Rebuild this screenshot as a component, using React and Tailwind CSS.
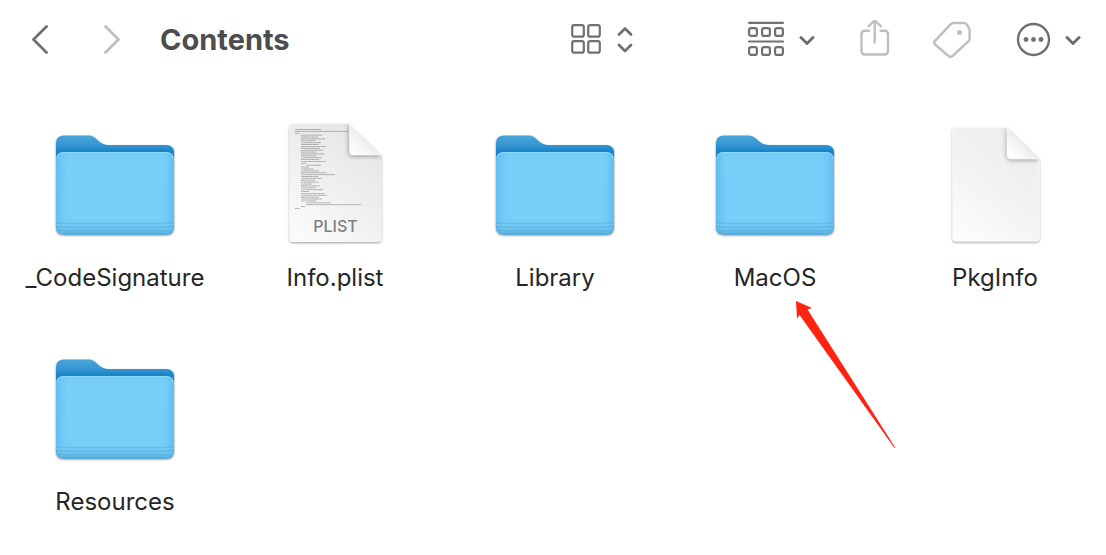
const files = [
  { name: "_CodeSignature", kind: "folder" },
  { name: "Info.plist", kind: "plist" },
  { name: "Library", kind: "folder" },
  { name: "MacOS", kind: "folder", marked: true },
  { name: "PkgInfo", kind: "blank" },
  { name: "Resources", kind: "folder" },
];

// [indent, length] of every line in the plist thumbnail
const plistLines = [
  [24, 26], [24, 53], [24, 5], [30, 21], [30, 17], [30, 24], [30, 14],
  [30, 20], [30, 18], [30, 25], [30, 19], [30, 22], [30, 16], [30, 23],
  [30, 15], [30, 21], [30, 18], [30, 25], [30, 5], [35, 15], [30, 8],
  [30, 13], [30, 18], [30, 26], [30, 34], [30, 17], [30, 21], [30, 14],
  [30, 18], [30, 11], [30, 19], [30, 15], [30, 22], [30, 8], [30, 23],
  [30, 26], [30, 18], [30, 21], [30, 15], [35, 25], [35, 55], [30, 4],
  [24, 5],
];

function FolderIcon() {
  return (
    <svg className="size-32" viewBox="0 0 128 128" aria-hidden="true">
      <defs>
        <linearGradient id="folder-back" x1="0" y1="15" x2="0" y2="34" gradientUnits="userSpaceOnUse">
          <stop offset="0" stopColor="#4ba6d9" />
          <stop offset="0.5" stopColor="#3797d2" />
          <stop offset="0.85" stopColor="#1a84c6" />
        </linearGradient>
        <linearGradient id="folder-front" x1="0" y1="31" x2="0" y2="115" gradientUnits="userSpaceOnUse">
          <stop offset="0" stopColor="#74cbf7" />
          <stop offset="0.1" stopColor="#78cff8" />
          <stop offset="0.82" stopColor="#77cef8" />
          <stop offset="0.93" stopColor="#64bee9" />
          <stop offset="1" stopColor="#56b0df" />
        </linearGradient>
        <linearGradient id="folder-sides">
          <stop offset="0" stopColor="#4aace0" stopOpacity="0.5" />
          <stop offset="0.1" stopColor="#62bfee" stopOpacity="0" />
          <stop offset="0.9" stopColor="#62bfee" stopOpacity="0" />
          <stop offset="1" stopColor="#4aace0" stopOpacity="0.5" />
        </linearGradient>
        <filter id="folder-shadow" x="-10%" y="-10%" width="120%" height="125%">
          <feDropShadow dx="0" dy="1" stdDeviation="0.8" floodOpacity="0.45" />
        </filter>
      </defs>
      <path
        filter="url(#folder-shadow)"
        fill="url(#folder-back)"
        d="M5 23.500Q5 15.500 13 15.500H38C46 15.500 47 25 58 25H115Q123 25 123 33V107Q123 114.500 115 114.500H13Q5 114.500 5 107Z"
      />
      <path
        fill="url(#folder-front)"
        d="M5 40Q5 32 13 32H115Q123 32 123 40V107Q123 114.500 115 114.500H13Q5 114.500 5 107Z"
      />
      <path
        fill="url(#folder-sides)"
        d="M5 40Q5 32 13 32H115Q123 32 123 40V107Q123 114.500 115 114.500H13Q5 114.500 5 107Z"
      />
      <path d="M6 38Q7 32.500 13 32.500H115Q121 32.500 122 38" fill="none" stroke="#8cdcff" strokeWidth="1" opacity="0.8" />
      <path d="M5 103.500H123M5 107.500H123" stroke="#4fb0de" strokeWidth="1" opacity="0.4" />
      <path d="M5 104.500H123M5 108.500H123" stroke="#83d5fa" strokeWidth="1" opacity="0.4" />
    </svg>
  );
}

function DocumentIcon({ plist }) {
  return (
    <svg className="size-32" viewBox="0 0 128 128" aria-hidden="true">
      <defs>
        <linearGradient id="paper" x1="0.8" y1="0" x2="0.2" y2="1">
          <stop offset="0" stopColor="#e5e5e5" />
          <stop offset="0.5" stopColor="#efefef" />
          <stop offset="1" stopColor="#fbfbfb" />
        </linearGradient>
        <linearGradient id="paper-plain" x1="0.8" y1="0" x2="0.2" y2="1">
          <stop offset="0" stopColor="#ededed" />
          <stop offset="0.5" stopColor="#f2f2f2" />
          <stop offset="1" stopColor="#fcfcfc" />
        </linearGradient>
        <linearGradient id="paper-fold" x1="0" y1="1" x2="0.6" y2="0.4">
          <stop offset="0" stopColor="#ffffff" />
          <stop offset="0.5" stopColor="#f8f8f8" />
          <stop offset="1" stopColor="#e6e6e6" />
        </linearGradient>
        <filter id="paper-shadow" x="-10%" y="-10%" width="120%" height="120%">
          <feDropShadow dx="0" dy="1" stdDeviation="1" floodOpacity="0.4" />
        </filter>
        <filter id="fold-shadow" x="-40%" y="-40%" width="180%" height="180%">
          <feGaussianBlur stdDeviation="2.5" />
        </filter>
        <clipPath id="plist-clip">
          <path d="M22 4H78L110.500 35V118Q110.500 122 106.500 122H22Q18.500 122 18.500 118V8Q18.500 4 22 4Z" />
        </clipPath>
        <clipPath id="blank-clip">
          <path d="M24 7.500H76L108 39V119Q108 121 106 121H24Q22 121 22 119V9.500Q22 7.500 24 7.500Z" />
        </clipPath>
      </defs>
      {plist ? (
        <>
          <path
            filter="url(#paper-shadow)"
            fill="url(#paper)"
            d="M22 4H78L110.500 35V118Q110.500 122 106.500 122H22Q18.500 122 18.500 118V8Q18.500 4 22 4Z"
          />
          {plistLines.map(([x, length], i) => (
            <line
              key={i}
              x1={x}
              x2={x + length}
              y1={9.5 + i * 1.88}
              y2={9.5 + i * 1.88}
              stroke="#555"
              strokeWidth="0.8"
              strokeDasharray="3 0.3 5 0.2 2 0.3"
              strokeDashoffset={i * 3}
              opacity="0.55"
            />
          ))}
          <g clipPath="url(#plist-clip)">
            <path d="M78 3V32Q78 36 82 36H111Z" fill="#000" opacity="0.4" filter="url(#fold-shadow)" />
          </g>
          <path d="M78.500 4V31Q78.500 35 82 35H110Z" fill="url(#paper-fold)" stroke="#fff" strokeWidth="0.6" />
          <text
            x="64.500"
            y="112"
            textAnchor="middle"
            fontSize="16"
            fontWeight="500"
            fontFamily="Inter, sans-serif"
            fill="#808080">
            PLIST
          </text>
        </>
      ) : (
        <>
          <path
            filter="url(#paper-shadow)"
            fill="url(#paper-plain)"
            stroke="#fafafa"
            strokeWidth="1"
            d="M24 7.500H76L108 39V119Q108 121 106 121H24Q22 121 22 119V9.500Q22 7.500 24 7.500Z"
          />
          <g clipPath="url(#blank-clip)">
            <path d="M76 7V36Q76 40 80 40H109Z" fill="#000" opacity="0.4" filter="url(#fold-shadow)" />
          </g>
          <path d="M76 8V35Q76 39 80 39H107.500Z" fill="url(#paper-fold)" stroke="#fff" strokeWidth="0.6" />
        </>
      )}
    </svg>
  );
}

function FileIcon({ kind }) {
  if (kind === "folder") return <FolderIcon />;
  return <DocumentIcon plist={kind === "plist"} />;
}

function ChevronDown() {
  return (
    <svg className="w-4 h-10" viewBox="0 0 16 40" fill="none" stroke="currentColor" strokeWidth="3" strokeLinecap="round" strokeLinejoin="round" aria-hidden="true">
      <path d="M2 17.500L8 23.500L14 17.500" />
    </svg>
  );
}

function Toolbar() {
  return (
    <header className="flex items-center pl-8 pr-[25px] h-20 text-[#707070]">
      <nav className="flex gap-14" aria-label="History">
        <button type="button" aria-label="Back">
          <svg className="w-4 h-10" viewBox="0 0 16 40" fill="none" stroke="currentColor" strokeWidth="2.800" strokeLinecap="round" strokeLinejoin="round">
            <path d="M14.500 6.500L1.500 19.500L14.500 32.500" />
          </svg>
        </button>
        <button type="button" aria-label="Forward" className="text-[#bdbdbd]">
          <svg className="w-4 h-10" viewBox="0 0 16 40" fill="none" stroke="currentColor" strokeWidth="2.800" strokeLinecap="round" strokeLinejoin="round">
            <path d="M1.500 6.500L14.500 19.500L1.500 32.500" />
          </svg>
        </button>
      </nav>
      <h1 className="ml-10 text-[29px] leading-10 font-bold text-[#4d4d4d]">Contents</h1>

      <button type="button" aria-label="View as icons" className="flex items-center gap-[15px] ml-auto">
        <svg className="w-8 h-10" viewBox="0 0 32 40" fill="none" stroke="currentColor" strokeWidth="2.200">
          <rect x="2.200" y="5.100" width="11.600" height="11.600" rx="2" />
          <rect x="18.200" y="5.100" width="11.600" height="11.600" rx="2" />
          <rect x="2.200" y="21.100" width="11.600" height="11.600" rx="2" />
          <rect x="18.200" y="21.100" width="11.600" height="11.600" rx="2" />
        </svg>
        <svg className="w-4 h-10" viewBox="0 0 16 40" fill="none" stroke="currentColor" strokeWidth="2.800" strokeLinecap="round" strokeLinejoin="round">
          <path d="M2 14.500L8 8.500L14 14.500M2 25L8 31L14 25" />
        </svg>
      </button>

      <button type="button" aria-label="Group items" className="flex items-center gap-3.5 ml-[114px]">
        <svg className="w-[38px] h-10" viewBox="0 0 38 40" fill="none" stroke="currentColor" strokeWidth="2.200" strokeLinecap="round">
          <path d="M2 2.800H36M2 21.500H36" />
          <rect x="2.100" y="8.100" width="7.800" height="7.800" rx="2" />
          <rect x="15.100" y="8.100" width="7.800" height="7.800" rx="2" />
          <rect x="28.100" y="8.100" width="7.800" height="7.800" rx="2" />
          <rect x="2.100" y="27.100" width="7.800" height="7.800" rx="2" />
          <rect x="15.100" y="27.100" width="7.800" height="7.800" rx="2" />
          <rect x="28.100" y="27.100" width="7.800" height="7.800" rx="2" />
        </svg>
        <ChevronDown />
      </button>

      <button type="button" aria-label="Share" className="ml-11 text-[#bfbfbf]">
        <svg className="w-8 h-10" viewBox="0 0 32 40" fill="none" stroke="currentColor" strokeWidth="2.400" strokeLinecap="round" strokeLinejoin="round">
          <path d="M10 10.800H6Q2.500 10.800 2.500 14.300V31Q2.500 34.500 6 34.500H25.500Q29 34.500 29 31V14.300Q29 10.800 25.500 10.800H21.500" />
          <path d="M15.700 22.500V0.800M9.700 6.200L15.700 0.500L21.700 6.200" />
        </svg>
      </button>

      <button type="button" aria-label="Edit tags" className="ml-[41px] text-[#bfbfbf]">
        <svg className="w-10 h-10" viewBox="0 0 40 40" fill="none" stroke="currentColor" strokeWidth="2.400" strokeLinecap="round" strokeLinejoin="round">
          <path d="M21.500 3H32Q33.500 3 34.500 4.200L37 8Q37.600 9 37.600 10V18.500Q37.600 20.200 36.400 21.300L20.500 36Q18.500 37.700 16.500 36L3 24.500Q1.300 22.800 3 20.900L18.500 4.400Q19.800 3 21.500 3Z" />
          <circle cx="27.500" cy="12.500" r="2.500" fill="currentColor" stroke="none" />
        </svg>
      </button>

      <button type="button" aria-label="Actions" className="flex items-center gap-3.5 ml-[43px]">
        <svg className="w-9 h-10" viewBox="0 0 36 40" fill="none" stroke="currentColor" strokeWidth="2.400" aria-hidden="true">
          <circle cx="18.500" cy="19.500" r="15.500" />
          <g fill="currentColor" stroke="none">
            <circle cx="11" cy="19.500" r="2.400" />
            <circle cx="18.500" cy="19.500" r="2.400" />
            <circle cx="26" cy="19.500" r="2.400" />
          </g>
        </svg>
        <ChevronDown />
      </button>
    </header>
  );
}

// Red pointer hanging below the marked file
function Pointer() {
  return (
    <svg className="absolute top-full left-1/2 ml-5 mt-1.5 w-[104px] h-[150px] pointer-events-none" viewBox="0 0 104 150" aria-hidden="true">
      <path d="M1 1L17 8L12.500 9.500L100.500 148L99.500 148L4.500 15L2 18.500Z" fill="#ff2312" />
    </svg>
  );
}

export default function App() {
  return (
    <div className="min-h-screen bg-white font-[Inter,sans-serif]">
      <Toolbar />
      <main className="pt-10 pl-[5px] pr-px pb-8">
        <ul className="grid grid-cols-5 gap-y-[50px]">
          {files.map((file) => (
            <li key={file.name} className="relative flex justify-center">
              <button type="button" className="flex flex-col items-center gap-3.5">
                <FileIcon kind={file.kind} />
                <span className="text-2xl leading-8 text-[#262626]">{file.name}</span>
              </button>
              {file.marked && <Pointer />}
            </li>
          ))}
        </ul>
      </main>
    </div>
  );
}
